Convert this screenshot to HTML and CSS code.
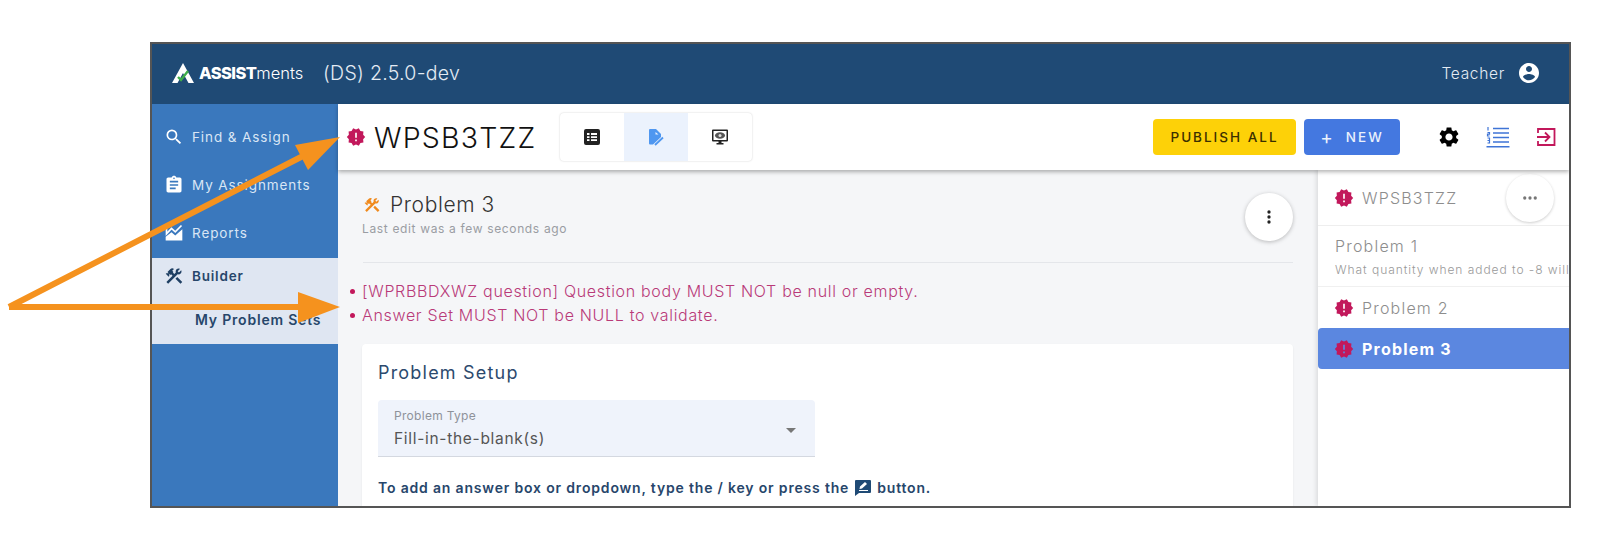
FILE: index.html
```html
<!DOCTYPE html>
<html lang="en">
<head>
<meta charset="utf-8">
<title>ASSISTments Builder</title>
<link rel="stylesheet" href="styles.css">
</head>
<body>
<svg class="sprite" aria-hidden="true">
  <symbol id="i-alert" viewBox="0 0 24 24"><path d="M23,12L20.56,9.22L20.9,5.54L17.29,4.72L15.4,1.54L12,3L8.6,1.54L6.71,4.72L3.1,5.53L3.44,9.21L1,12L3.44,14.78L3.1,18.47L6.71,19.29L8.6,22.47L12,21L15.4,22.46L17.29,19.28L20.9,18.46L20.56,14.78L23,12M13,17H11V15H13V17M13,13H11V7H13V13Z"/></symbol>
  <symbol id="i-tools" viewBox="0 0 24 24"><path d="M13.78 15.3L19.78 21.3L21.89 19.14L15.89 13.14L13.78 15.3M17.5 10.1C17.11 10.1 16.69 10.05 16.36 9.91L4.97 21.25L2.86 19.14L10.27 11.74L8.5 9.96L7.78 10.66L6.33 9.25V12.11L5.63 12.81L2.11 9.25L2.81 8.55H5.62L4.22 7.14L7.78 3.58C8.95 2.41 10.83 2.41 12 3.58L9.89 5.74L11.3 7.14L10.59 7.85L12.38 9.63L14.2 7.75C14.06 7.42 14 7 14 6.63C14 4.66 15.56 3.11 17.5 3.11C18.09 3.11 18.61 3.25 19.08 3.53L16.41 6.2L17.91 7.7L20.58 5.03C20.86 5.5 21 6 21 6.63C21 8.55 19.45 10.1 17.5 10.1Z"/></symbol>
</svg>

<div class="frame">
  <header class="topbar">
    <div class="brand">
      <svg class="logo" viewBox="0 0 24 22"><path fill="#fff" d="M12 1L23 21H17.5L12 11L6.500 21H1Z"/><path fill="none" stroke="#3fae49" stroke-width="2.400" d="M7 15L10 18L17 9"/></svg>
      <span class="wordmark"><b>ASSIST</b>ments</span>
      <span class="version">(DS) 2.5.0-dev</span>
    </div>
    <div class="user">
      <span>Teacher</span>
      <svg class="user-icon" viewBox="0 0 24 24"><path d="M12 2C6.48 2 2 6.48 2 12s4.48 10 10 10 10-4.48 10-10S17.52 2 12 2zm0 3c1.66 0 3 1.34 3 3s-1.34 3-3 3-3-1.34-3-3 1.34-3 3-3zm0 14.2c-2.5 0-4.71-1.28-6-3.22.03-1.99 4-3.08 6-3.08 1.99 0 5.97 1.09 6 3.08-1.29 1.94-3.5 3.22-6 3.22z"/></svg>
    </div>
  </header>

  <div class="shell">
    <nav class="sidebar">
      <a class="nav-item"><svg class="nav-icon" viewBox="0 0 24 24"><path d="M15.5 14h-.79l-.28-.27A6.471 6.471 0 0 0 16 9.500 6.500 6.500 0 1 0 9.500 16c1.610 0 3.090-.59 4.230-1.570l.27.28v.79l5 4.990L20.490 19l-4.990-5zm-6 0C7.010 14 5 11.990 5 9.500S7.010 5 9.500 5 14 7.010 14 9.500 11.990 14 9.500 14z"/></svg>Find &amp; Assign</a>
      <a class="nav-item"><svg class="nav-icon" viewBox="0 0 24 24"><path d="M19 3h-4.180C14.400 1.840 13.300 1 12 1c-1.300 0-2.400.84-2.820 2H5c-1.100 0-2 .9-2 2v14c0 1.100.9 2 2 2h14c1.100 0 2-.9 2-2V5c0-1.100-.9-2-2-2zm-7 0c.55 0 1 .45 1 1s-.45 1-1 1-1-.45-1-1 .45-1 1-1zm2 14H7v-2h7v2zm3-4H7v-2h10v2zm0-4H7V7h10v2z"/></svg>My Assignments</a>
      <a class="nav-item"><svg class="nav-icon" viewBox="0 0 24 24"><path d="M2 16.500L9 11L13.500 15L22 7.500V21H2Z"/><path class="report-line" d="M3 3V13L9 6.500L13.500 10.500L21 3"/></svg>Reports</a>
      <div class="nav-group">
        <a class="nav-item nav-item-active"><svg class="nav-icon" viewBox="0 0 24 24"><use href="#i-tools"/></svg>Builder</a>
        <a class="nav-sub">My Problem Sets</a>
      </div>
    </nav>

    <div class="content">
      <div class="toolbar">
        <div class="title-wrap">
          <svg class="badge badge-lg" viewBox="0 0 24 24"><use href="#i-alert"/></svg>
          <h1 class="title">WPSB3TZZ</h1>
        </div>
        <div class="toggle">
          <span class="toggle-cell">
            <svg class="toggle-icon" viewBox="0 0 18 18"><path fill="#222" fill-rule="evenodd" d="M3 1H15A2 2 0 0 1 17 3V15A2 2 0 0 1 15 17H3A2 2 0 0 1 1 15V3A2 2 0 0 1 3 1ZM4 5V7H6.500V5ZM8 5V7H14V5ZM4 8.200V10H6.500V8.200ZM8 8.200V10H14V8.200ZM4 11.200V13H6.500V11.200ZM8 11.200V13H14V11.200Z"/></svg>
          </span>
          <span class="toggle-cell toggle-cell-on">
            <svg class="toggle-icon" viewBox="0 0 18 18"><path fill="#4f97f0" d="M3 1H9L14 6V9L6 16.500H3A1 1 0 0 1 2 15.500V2A1 1 0 0 1 3 1Z"/><path fill="none" stroke="#4f97f0" stroke-width="1.800" d="M8 17L16 9.500"/><path fill="#ebf2fd" d="M8.500 4L11.500 6.500L8.500 6.500Z"/></svg>
          </span>
          <span class="toggle-cell">
            <svg class="toggle-icon" viewBox="0 0 18 18"><path fill="#222" fill-rule="evenodd" d="M2 1.500H16A1 1 0 0 1 17 2.500V12.500A1 1 0 0 1 16 13.500H10.500V15H12.500V16.500H5.500V15H7.500V13.500H2A1 1 0 0 1 1 12.500V2.500A1 1 0 0 1 2 1.500ZM2.500 3V12H15.500V3Z"/><ellipse cx="9" cy="7.500" rx="5" ry="3.200" fill="#555"/><circle cx="9" cy="7.500" r="1.500" fill="#ddd"/></svg>
          </span>
        </div>
        <div class="actions">
          <button class="btn btn-publish">PUBLISH ALL</button>
          <button class="btn btn-new"><span class="plus">+</span>NEW</button>
          <svg class="tool tool-gear" viewBox="0 0 24 24"><path d="M19.140 12.940c.04-.3.06-.61.06-.94 0-.32-.02-.64-.07-.94l2.030-1.580c.18-.14.23-.41.12-.61l-1.920-3.320c-.12-.22-.37-.29-.59-.22l-2.390.96c-.5-.38-1.030-.7-1.620-.94l-.36-2.540c-.04-.24-.24-.41-.48-.41h-3.840c-.24 0-.43.17-.47.41l-.36 2.540c-.59.24-1.130.57-1.620.94l-2.390-.96c-.22-.08-.47 0-.59.22L2.740 8.870c-.12.21-.08.47.12.61l2.030 1.580c-.05.3-.09.63-.09.94s.02.64.07.94l-2.030 1.580c-.18.14-.23.41-.12.61l1.920 3.320c.12.22.37.29.59.22l2.390-.96c.5.38 1.030.7 1.620.94l.36 2.540c.05.24.24.41.48.41h3.840c.24 0 .44-.17.47-.41l.36-2.540c.59-.24 1.130-.56 1.620-.94l2.390.96c.22.08.47 0 .59-.22l1.920-3.320c.12-.22.07-.47-.12-.61l-2.010-1.580zM12 15.600c-1.980 0-3.600-1.620-3.600-3.600s1.620-3.600 3.600-3.600 3.600 1.620 3.600 3.600-1.620 3.600-3.600 3.600z"/></svg>
          <svg class="tool tool-list" viewBox="0 0 24 24"><path fill="none" stroke="#3f74d6" stroke-width="1.400" d="M7 3.500H23M7 8H23M7 12.500H23M7 17H23M0.500 21.800H23.500"/><path fill="none" stroke="#3f74d6" stroke-width="1.200" d="M2 2V5.500M1.500 7.500H3.500V9.200H1.500V11H3.500M1.500 13H3.500V18H1.500M1.500 15.500H3.500"/></svg>
          <svg class="tool tool-exit" viewBox="0 0 20 20"><path fill="none" stroke="#c2185b" stroke-width="1.800" d="M2 6V2H18.500V18H2V14M1 10H13M9 5.500L13.500 10L9 14.500"/></svg>
        </div>
      </div>

      <div class="workspace">
        <main class="editor">
          <div class="editor-head">
            <div>
              <div class="problem-title"><svg class="problem-icon" viewBox="0 0 24 24"><use href="#i-tools"/></svg>Problem 3</div>
              <div class="last-edit">Last edit was a few seconds ago</div>
            </div>
            <span class="round-btn"><svg class="kebab" viewBox="0 0 24 24"><path d="M12 8a2 2 0 1 0 0-4 2 2 0 0 0 0 4zm0 2a2 2 0 1 0 0 4 2 2 0 0 0 0-4zm0 6a2 2 0 1 0 0 4 2 2 0 0 0 0-4z"/></svg></span>
          </div>
          <ul class="errors">
            <li>[WPRBBDXWZ question] Question body MUST NOT be null or empty.</li>
            <li>Answer Set MUST NOT be NULL to validate.</li>
          </ul>
          <section class="card">
            <h2 class="card-title">Problem Setup</h2>
            <div class="select">
              <div>
                <div class="select-label">Problem Type</div>
                <div class="select-value">Fill-in-the-blank(s)</div>
              </div>
              <span class="caret"></span>
            </div>
            <p class="hint">To add an answer box or dropdown, type the / key or press the
              <svg class="hint-icon" viewBox="0 0 18 18"><path fill="#1f4a75" fill-rule="evenodd" d="M2 1H16A1 1 0 0 1 17 2V13A1 1 0 0 1 16 14H5L1 17V2A1 1 0 0 1 2 1ZM5 11H14V12H5ZM5.500 10L6 7.500L11 3L13 5L8 9.500Z"/></svg>
              button.</p>
          </section>
        </main>

        <aside class="outline">
          <div class="outline-head">
            <svg class="badge" viewBox="0 0 24 24"><use href="#i-alert"/></svg>
            <span class="outline-name">WPSB3TZZ</span>
            <span class="round-btn round-btn-right"><svg class="dots" viewBox="0 0 24 24"><circle cx="5" cy="12" r="2.200"/><circle cx="12" cy="12" r="2.200"/><circle cx="19" cy="12" r="2.200"/></svg></span>
          </div>
          <div class="outline-plain">
            <div class="outline-name">Problem 1</div>
            <div class="outline-sub">What quantity when added to -8 will</div>
          </div>
          <div class="outline-row">
            <svg class="badge" viewBox="0 0 24 24"><use href="#i-alert"/></svg>
            <span class="outline-name">Problem 2</span>
          </div>
          <div class="outline-row outline-row-on">
            <svg class="badge" viewBox="0 0 24 24"><use href="#i-alert"/></svg>
            <span>Problem 3</span>
          </div>
        </aside>
      </div>
    </div>
  </div>
</div>

<svg class="arrows" viewBox="0 0 1600 540" aria-hidden="true">
  <path class="arrow-line" d="M9 307L303 156M9 307H302"/>
  <path class="arrow-head" d="M340 137L295 145L308 170Z"/>
  <path class="arrow-head" d="M340 307L298 292V323Z"/>
</svg>
</body>
</html>
```

FILE: styles.css
```css
* { box-sizing: border-box; }
html, body { margin: 0; height: 540px; overflow: hidden; background: #fff; }
body {
  position: relative;
  padding: 42px 0 0 150px;
  font-family: Inter, "Open Sans", sans-serif;
  color: #333;
}
.sprite { display: none; }
.frame {
  width: 1421px;
  height: 466px;
  border: 2px solid #555;
  display: flex;
  flex-direction: column;
  overflow: hidden;
  background: #f5f6f8;
}

/* top bar */
.topbar {
  flex: 0 0 60px;
  background: #1f4a75;
  color: #e4ebf3;
  display: flex;
  align-items: center;
  justify-content: space-between;
  padding: 0 28px 2px 19px;
}
.brand { display: flex; align-items: center; }
.logo { width: 24px; height: 22px; margin-right: 4px; }
.wordmark { font-size: 16.5px; letter-spacing: 0; width: 124px; font-weight: 300; color: #fff; white-space: nowrap; }
.wordmark b { font-weight: 800; letter-spacing: -0.6px; }
.version { font-size: 19.5px; font-weight: 300; letter-spacing: 0.3px; }
.user { display: flex; align-items: center; gap: 12px; font-size: 15.5px; font-weight: 300; letter-spacing: .7px; }
.user-icon { width: 24px; height: 24px; fill: #fff; }

.shell { flex: 1; display: flex; min-height: 0; }

/* sidebar */
.sidebar {
  flex: 0 0 186px;
  background: #3a78bd;
  padding-top: 9px;
  display: flex;
  flex-direction: column;
}
.nav-item {
  height: 48px;
  display: flex;
  align-items: center;
  padding-left: 12px;
  gap: 8px;
  color: #d9e6f5;
  font-size: 13.5px;
  letter-spacing: .9px;
}
.nav-icon { width: 20px; height: 20px; fill: #fff; flex: none; }
.report-line { fill: none; stroke: #fff; stroke-width: 2; }
.nav-group {
  background: #dfe6f2;
  height: 86px;
  margin-top: 1px;
  color: #27466b;
}
.nav-item-active {
  height: 36px;
  color: #27466b;
  font-weight: 600;
  letter-spacing: .8px;
}
.nav-item-active .nav-icon { fill: #1f3f63; }
.nav-sub {
  display: block;
  padding: 17px 0 0 43px;
  font-size: 14px;
  font-weight: 600;
  letter-spacing: .8px;
  color: #27466b;
  white-space: nowrap;
}

/* content */
.content { flex: 1; display: flex; flex-direction: column; min-width: 0; }
.toolbar {
  flex: 0 0 66px;
  background: #fff;
  display: flex;
  align-items: center;
  box-shadow: 0 2px 4px rgba(0,0,0,.3);
  position: relative;
  z-index: 2;
  padding: 0 13px 0 8px;
}
.title-wrap { display: flex; align-items: center; gap: 8px; width: 214px; }
.title { margin: 0; font-size: 28.5px; font-weight: 300; color: #111; letter-spacing: 1.2px; white-space: nowrap; }
.badge { width: 20px; height: 20px; fill: #c2185b; flex: none; }
.toggle {
  display: flex;
  height: 48px;
  border-radius: 4px;
  box-shadow: 0 0 2px rgba(0,0,0,.2);
  overflow: hidden;
}
.toggle-cell { width: 64px; display: flex; align-items: center; justify-content: center; }
.toggle-cell-on { background: #ebf2fd; }
.toggle-icon { width: 18px; height: 18px; }
.actions { margin-left: auto; display: flex; align-items: center; }
.btn {
  height: 36px;
  border: 0;
  border-radius: 4px;
  font: 500 13.5px Inter, sans-serif;
  letter-spacing: 2px;
  display: flex;
  align-items: center;
  justify-content: center;
}
.btn-publish { width: 143px; background: #fdd108; color: #3a2f00; margin-right: 8px; }
.btn-new { width: 96px; background: #4478e0; color: #eaf1fc; margin-right: 37px; }
.plus { font-size: 19px; font-weight: 400; margin-right: 13px; letter-spacing: 0; }
.tool { width: 24px; height: 24px; flex: none; }
.tool-gear { fill: #000; margin-right: 25px; }
.tool-list { margin-right: 26px; }
.tool-exit { width: 20px; height: 20px; }

/* workspace */
.workspace { flex: 1; display: flex; min-height: 0; }
.editor { flex: 1; min-width: 0; padding: 0 25px 0 24px; }
.editor-head {
  height: 93px;
  border-bottom: 1px solid #e4e6ea;
  display: flex;
  justify-content: space-between;
  padding-top: 23px;
  margin-left: 1px;
}
.problem-title { display: flex; align-items: center; gap: 9px; font-size: 21px; font-weight: 300; color: #333; letter-spacing: .6px; line-height: 24px; }
.problem-icon { width: 18px; height: 18px; fill: #f08a1d; }
.last-edit { margin-top: 4px; font-size: 12px; color: #9a9da3; letter-spacing: .65px; white-space: nowrap; margin-left: -1px; }
.round-btn {
  width: 48px;
  height: 48px;
  border-radius: 50%;
  background: #fff;
  box-shadow: 0 1px 4px rgba(0,0,0,.25);
  display: flex;
  align-items: center;
  justify-content: center;
  flex: none;
}
.kebab { width: 20px; height: 20px; fill: #222; }
.errors {
  margin: 16px 0 0 -12px;
  padding: 0 0 0 12px;
  list-style: none;
  font-size: 16px;
  line-height: 24px;
  font-weight: 300;
  color: #b93a78;
  letter-spacing: .68px;
  white-space: nowrap;
}
.errors li { position: relative; }
.errors li::before {
  content: "";
  position: absolute;
  left: -12px;
  top: 10px;
  width: 5px;
  height: 5px;
  border-radius: 50%;
  background: #c2185b;
}
.card {
  margin-top: 17px;
  background: #fff;
  border-radius: 4px;
  box-shadow: 0 1px 2px rgba(0,0,0,.08);
  padding: 18px 16px 0;
  height: 182px;
}
.card-title { margin: 0; font-size: 18px; font-weight: 400; color: #2c4a6e; letter-spacing: 1.2px; line-height: 22px; }
.select {
  margin-top: 16px;
  width: 437px;
  height: 57px;
  background: #eff3fb;
  border-bottom: 1px solid #d4d8e0;
  border-radius: 4px 4px 0 0;
  padding: 9px 16px 0;
  display: flex;
  justify-content: space-between;
}
.select-label { font-size: 12px; color: #8e929a; line-height: 14px; letter-spacing: .3px; }
.select-value { font-size: 15.5px; color: #555; line-height: 24px; margin-top: 4px; letter-spacing: .7px; }
.caret {
  margin: 19px 3px 0 0;
  border: 5px solid transparent;
  border-top-color: #777;
  border-bottom: 0;
  height: 0;
}
.hint { margin: 21px 0 0; font-size: 14px; font-weight: 600; color: #27466b; letter-spacing: .82px; line-height: 20px; display: flex; align-items: center; gap: 5px; white-space: nowrap; }
.hint-icon { width: 18px; height: 18px; flex: none; }

/* outline */
.outline {
  flex: 0 0 251px;
  background: #fff;
  box-shadow: -2px 0 4px rgba(0,0,0,.1);
  overflow: hidden;
  position: relative;
  color: #999;
}
.outline-head {
  height: 56px;
  border-bottom: 1px solid #eee;
  display: flex;
  align-items: center;
  padding-left: 16px;
  gap: 8px;
}
.outline-name { font-size: 16px; font-weight: 300; letter-spacing: 1.2px; color: #8d8d8d; }
.round-btn-right { position: absolute; right: 15px; top: 4px; box-shadow: 0 1px 3px rgba(0,0,0,.2); }
.dots { width: 18px; height: 18px; fill: #777; }
.outline-plain { height: 61px; padding: 10px 0 0 17px; border-bottom: 1px solid #f0f0f0; white-space: nowrap; }
.outline-sub { margin-top: 6px; font-size: 12px; font-weight: 300; letter-spacing: .95px; color: #999; }
.outline-row {
  height: 41px;
  display: flex;
  align-items: center;
  padding-left: 16px;
  gap: 8px;
}
.outline-row-on {
  background: #5b87e0;
  border-radius: 4px 0 0 4px;
  color: #fff;
  font-size: 16px;
  font-weight: 700;
  letter-spacing: 1.2px;
}

/* annotation arrows */
.arrows { position: absolute; left: 0; top: 0; width: 1600px; height: 540px; pointer-events: none; z-index: 5; }
.arrow-line { fill: none; stroke: #f5921e; stroke-width: 6; stroke-linejoin: miter; }
.arrow-head { fill: #f5921e; }
```
